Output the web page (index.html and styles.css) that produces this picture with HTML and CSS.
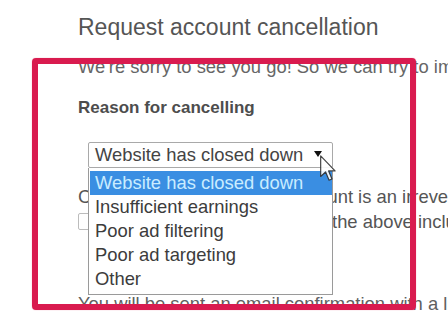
FILE: index.html
```html
<!DOCTYPE html>
<html>
<head>
<meta charset="utf-8">
<link rel="stylesheet" href="styles.css">
</head>
<body>
<div class="page">
  <h1 class="title">Request account cancellation</h1>
  <p class="intro">We're sorry to see you go! So we can try to improve, please tell us why you're leaving.</p>
  <h2 class="heading">Reason for cancelling</h2>
  <div class="select-wrap">
    <div class="select">
      <span class="select-text">Website has closed down</span>
      <span class="caret"></span>
    </div>
    <ul class="options">
      <li class="option selected">Website has closed down</li>
      <li class="option">Insufficient earnings</li>
      <li class="option">Poor ad filtering</li>
      <li class="option">Poor ad targeting</li>
      <li class="option">Other</li>
    </ul>
    <svg class="cursor" width="16" height="27" viewBox="0 0 12 20">
      <path d="M0.5 0.5 L0.5 16 L4.2 12.6 L6.8 18.8 L9 17.9 L6.5 11.8 L11.3 11.8 Z" fill="#fff" stroke="#333" stroke-width="0.9" stroke-linejoin="round"/>
    </svg>
  </div>
  <p class="line">Cancelling your AdSense account is an irreversible action.</p>
  <label class="line check-line"><span class="checkbox"></span><span>I have read and agree to all the above including</span></label>
  <p class="line bottom">You will be sent an email confirmation with a link to complete the process.</p>
  <div class="annotation"></div>
</div>
</body>
</html>
```
FILE: styles.css
```css
html, body {
  margin: 0;
  padding: 0;
  background: #fff;
  overflow: hidden;
}
body {
  width: 448px;
  height: 329px;
  font-family: "Liberation Sans", Arial, sans-serif;
}
.page {
  position: relative;
  padding: 13px 0 0 78px;
  white-space: nowrap;
}
.title {
  margin: 0;
  font-size: 23px;
  line-height: 28px;
  font-weight: normal;
  color: #555;
}
.intro {
  margin: 14px 0 0;
  font-size: 18.4px;
  line-height: 24px;
  color: #666;
}
.heading {
  margin: 17px 0 0;
  font-size: 17px;
  line-height: 24px;
  font-weight: bold;
  color: #4d4d4d;
}
.select-wrap {
  position: relative;
  margin: 22px 0 0 10px;
  width: 245px;
  z-index: 2;
}
.select {
  box-sizing: border-box;
  height: 26px;
  border: 1px solid #a9a9a9;
  border-radius: 2px;
  background: #fff;
  display: flex;
  align-items: center;
  justify-content: space-between;
  padding: 0 10px 0 6px;
  font-size: 18.4px;
  line-height: 24px;
  color: #444;
}
.caret {
  width: 0;
  height: 0;
  border-left: 4px solid transparent;
  border-right: 4px solid transparent;
  border-top: 6px solid #111;
  margin-top: -2px;
}
.options {
  position: absolute;
  left: 0;
  top: 26px;
  box-sizing: border-box;
  width: 245px;
  margin: 0;
  padding: 3px 0 3px 1px;
  list-style: none;
  background: #fff;
  border: 1px solid #9a9a9a;
  border-top: none;
}
.option {
  height: 24px;
  line-height: 24px;
  padding-left: 5px;
  font-size: 18.4px;
  color: #3c3c3c;
}
.option.selected {
  background: #3a8ee2;
  color: #c9ecff;
}
.cursor {
  position: absolute;
  left: 232px;
  top: 13px;
  opacity: 0.9;
}
.line {
  display: block;
  margin: 0;
  font-size: 18.4px;
  line-height: 24px;
  color: #555;
}
.select-wrap + .line {
  margin-top: 17px;
}
.check-line {
  display: flex;
  align-items: center;
  gap: 8px;
  line-height: 25px;
}
.checkbox {
  width: 15px;
  height: 15px;
  border: 1px solid #bcbcbc;
  border-radius: 2px;
  flex: none;
}
.bottom {
  margin-top: 58px;
  color: #606060;
}
.annotation {
  position: absolute;
  left: 32px;
  top: 58px;
  width: 384px;
  height: 252px;
  box-sizing: border-box;
  border: 6px solid #d91b4f;
  border-radius: 4px;
  box-shadow: 0 0 1px rgba(217, 27, 79, 0.6);
  z-index: 3;
}
```
